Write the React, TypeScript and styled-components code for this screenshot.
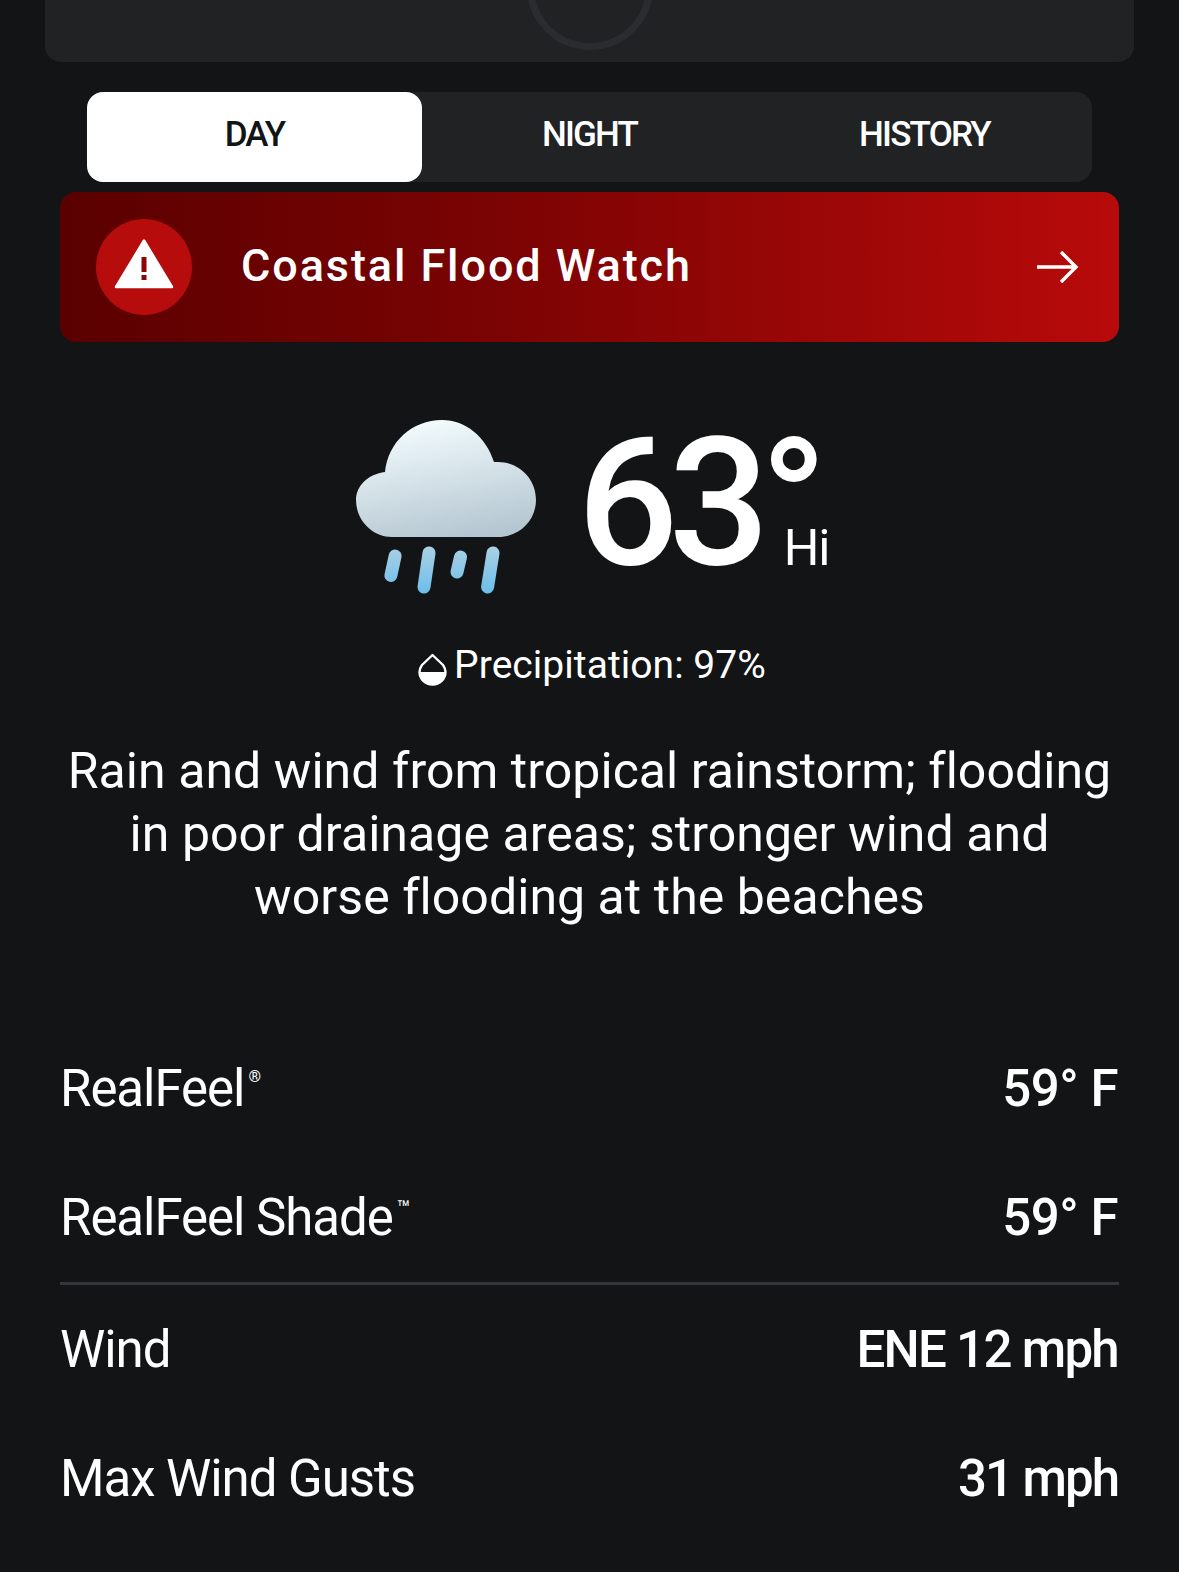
import React, { FC, ReactElement } from 'react';
import styled, { createGlobalStyle } from 'styled-components';

const GlobalStyle = createGlobalStyle`
  html, body {
    margin: 0;
    padding: 0;
    background-color: #121416;
  }
  * {
    box-sizing: border-box;
  }
`;

const tabs = ['DAY', 'NIGHT', 'HISTORY'];

const rowGroups = [
  [
    { label: 'RealFeel', mark: '®', markSize: 16, markRaise: 24, value: '59° F', tracking: -0.5 },
    { label: 'RealFeel Shade', mark: '™', markSize: 22, markRaise: 19, value: '59° F', tracking: -0.5 },
  ],
  [
    { label: 'Wind', mark: '', markSize: 0, markRaise: 0, value: 'ENE 12 mph', tracking: -1.7 },
    { label: 'Max Wind Gusts', mark: '', markSize: 0, markRaise: 0, value: '31 mph', tracking: -2 },
  ],
];

const WarningIcon: FC = (): ReactElement => (
  <svg width="60" height="52" viewBox="0 0 60 52">
    <path
      d="M30 2.5 L58 49 H2 Z"
      fill="#fff"
      stroke="#fff"
      strokeWidth="2.5"
      strokeLinejoin="round"
    />
    <rect x="27.5" y="19" width="5" height="15" fill="#8f0606" />
    <rect x="27.5" y="37" width="5" height="5" fill="#8f0606" />
  </svg>
);

const ArrowIcon: FC = (): ReactElement => (
  <svg width="44" height="36" viewBox="0 0 44 36">
    <path
      d="M2 18 H41 M26 3 L41 18 L26 33"
      fill="none"
      stroke="#fff"
      strokeWidth="3.4"
    />
  </svg>
);

const RainCloud: FC = (): ReactElement => (
  <svg width="184" height="176" viewBox="14 16 184 176">
    <defs>
      <linearGradient id="cloudFill" x1="0.35" y1="0" x2="0.65" y2="1">
        <stop offset="0" stopColor="#f3fcfe" />
        <stop offset="1" stopColor="#b4c6d1" />
      </linearGradient>
      <linearGradient id="dropFill" gradientUnits="userSpaceOnUse" x1="0" y1="146" x2="0" y2="190">
        <stop offset="0" stopColor="#a9d0e4" />
        <stop offset="1" stopColor="#6ebeea" />
      </linearGradient>
    </defs>
    <path
      d="M154 60 C146 35 126 18 102 18 C72 18 48 40 45 70 C28 72 16 84 16 98 C16 118 32 135 52 135 H158 C180 135 196 118 196 98 C196 76 178 60 158 60 Z"
      fill="url(#cloudFill)"
    />
    <g stroke="url(#dropFill)" strokeWidth="13" strokeLinecap="round">
      <path d="M55.1 154 L50.9 173.5" />
      <path d="M89 151 L84 185" />
      <path d="M120.5 155 L117 170" />
      <path d="M153 151 L147.6 185" />
    </g>
  </svg>
);

const DropIcon: FC = (): ReactElement => (
  <svg width="29" height="33" viewBox="0 0 29 33">
    <path
      d="M14.5 2 L25 12 A13 13 0 0 1 27.5 19 A13 12.5 0 0 1 1.5 19 A13 13 0 0 1 4 12 Z"
      fill="none"
      stroke="#fff"
      strokeWidth="2.4"
      strokeLinejoin="round"
    />
    <path d="M1.5 19 H27.5 A13 12.5 0 0 1 1.5 19 Z" fill="#fff" />
  </svg>
);

export default function App(): ReactElement {
  return (
    <Page>
      <GlobalStyle />
      <TopCard>
        <Gauge />
      </TopCard>
      <TabBar>
        {tabs.map((tab, idx) => (
          <Tab key={tab} $active={idx === 0}>
            {tab}
          </Tab>
        ))}
      </TabBar>
      <AlertBanner>
        <AlertBadge>
          <WarningIcon />
        </AlertBadge>
        <AlertTitle>Coastal Flood Watch</AlertTitle>
        <ArrowIcon />
      </AlertBanner>
      <Hero>
        <RainCloud />
        <Temperature>63</Temperature>
        <TempSide>
          <Degree>°</Degree>
          <HiLabel>Hi</HiLabel>
        </TempSide>
      </Hero>
      <Precipitation>
        <DropIcon />
        <span>Precipitation: 97%</span>
      </Precipitation>
      <Summary>
        Rain and wind from tropical rainstorm; flooding
        <br />
        in poor drainage areas; stronger wind and
        <br />
        worse flooding at the beaches
      </Summary>
      <Details>
        {rowGroups.map((group, idx) => (
          <RowGroup key={idx} $divided={idx > 0}>
            {group.map((row) => (
              <Row key={row.label}>
                <RowLabel>
                  {row.label}
                  {row.mark && (
                    <Mark $size={row.markSize} $raise={row.markRaise}>
                      {row.mark}
                    </Mark>
                  )}
                </RowLabel>
                <RowValue $tracking={row.tracking}>{row.value}</RowValue>
              </Row>
            ))}
          </RowGroup>
        ))}
      </Details>
    </Page>
  );
}

const Page = styled.div`
  width: 1179px;
  height: 1572px;
  overflow: hidden;
  background-color: #121416;
  color: #fff;
  font-family: Roboto, 'Liberation Sans', sans-serif;
`;
const TopCard = styled.div`
  height: 62px;
  margin: 0 45px;
  background-color: #202224;
  border-radius: 0 0 16px 16px;
  overflow: hidden;
  display: flex;
  justify-content: center;
  align-items: flex-end;
  padding-bottom: 12px;
`;
const Gauge = styled.div`
  width: 126px;
  height: 126px;
  flex-shrink: 0;
  border: 7px solid #2a2c2f;
  border-radius: 50%;
`;
const TabBar = styled.div`
  height: 90px;
  margin: 30px 87px 0;
  display: grid;
  grid-template-columns: repeat(3, 1fr);
  background-color: #202224;
  border-radius: 16px;
`;
const Tab = styled.div<{ $active: boolean }>`
  display: flex;
  align-items: center;
  justify-content: center;
  padding-bottom: 6px;
  border-radius: 16px;
  font-size: 35px;
  font-weight: 500;
  letter-spacing: -1.8px;
  background-color: ${(p) => (p.$active ? '#fff' : 'transparent')};
  color: ${(p) => (p.$active ? '#121416' : '#fff')};
`;
const AlertBanner = styled.div`
  height: 150px;
  margin: 10px 60px 0;
  padding: 0 40px 0 36px;
  display: flex;
  align-items: center;
  border-radius: 16px;
  background: linear-gradient(90deg, #5a0000 0%, #7a0303 40%, #b80a0a 100%);
`;
const AlertBadge = styled.div`
  width: 96px;
  height: 96px;
  border-radius: 50%;
  background-color: #b70c0c;
  display: flex;
  align-items: center;
  justify-content: center;
  flex-shrink: 0;
  padding-bottom: 6px;
`;
const AlertTitle = styled.div`
  flex: 1;
  margin-left: 49px;
  padding-bottom: 4px;
  font-size: 45px;
  font-weight: 500;
  letter-spacing: 1.9px;
`;
const Hero = styled.div`
  margin-top: 76px;
  padding-left: 2px;
  height: 176px;
  display: flex;
  justify-content: center;
`;
const Temperature = styled.div`
  margin-left: 39px;
  font-size: 178px;
  font-weight: 500;
  line-height: 171px;
  letter-spacing: -10px;
`;
const TempSide = styled.div`
  width: 67px;
  display: flex;
  flex-direction: column;
  justify-content: space-between;
`;
const Degree = styled.div`
  height: 90px;
  font-size: 178px;
  font-weight: 500;
  line-height: 171px;
`;
const HiLabel = styled.div`
  margin: 0 0 20px 24px;
  font-size: 50px;
  font-weight: 400;
  line-height: 52px;
  letter-spacing: -1px;
`;
const Precipitation = styled.div`
  margin-top: 48px;
  padding-left: 5px;
  height: 46px;
  display: flex;
  justify-content: center;
  align-items: center;
  gap: 7px;
  font-size: 39px;
  font-weight: 400;
  letter-spacing: 0.05px;
  svg {
    margin-top: 8px;
  }
`;
const Summary = styled.div`
  margin-top: 52px;
  text-align: center;
  font-size: 50px;
  font-weight: 400;
  line-height: 63px;
  letter-spacing: 0.05px;
`;
const Details = styled.div`
  margin: 95px 60px 0;
`;
const RowGroup = styled.div<{ $divided: boolean }>`
  border-top: ${(p) => (p.$divided ? '3px solid #33363a' : 'none')};
`;
const Row = styled.div`
  height: 129px;
  display: flex;
  justify-content: space-between;
  align-items: center;
`;
const RowLabel = styled.div`
  font-size: 51px;
  font-weight: 400;
  letter-spacing: -1.05px;
`;
const Mark = styled.sup<{ $size: number; $raise: number }>`
  margin-left: 4px;
  font-size: ${(p) => p.$size}px;
  line-height: 0;
  vertical-align: ${(p) => p.$raise}px;
  font-weight: 400;
`;
const RowValue = styled.div<{ $tracking: number }>`
  padding-right: 1px;
  font-size: 51px;
  font-weight: 500;
  letter-spacing: ${(p) => p.$tracking}px;
`;
